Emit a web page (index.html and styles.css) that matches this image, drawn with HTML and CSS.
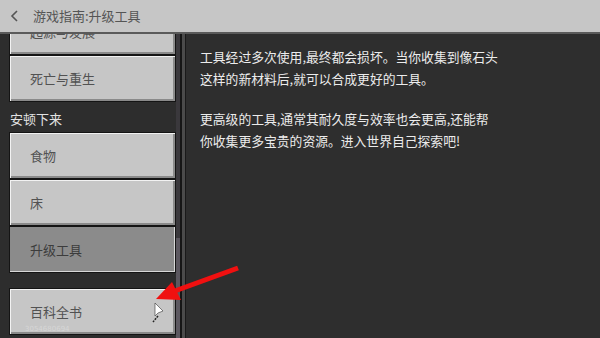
FILE: index.html
```html
<!DOCTYPE html>
<html lang="zh">
<head>
<meta charset="utf-8">
<link rel="stylesheet" href="styles.css">
</head>
<body>
<div class="app">
  <header class="topbar">
    <svg class="back" width="10" height="14" viewBox="0 0 10 14"><polyline points="7,2 2,7 7,12" fill="none" stroke="#555" stroke-width="1.6"/></svg>
    <span class="title">游戏指南:升级工具</span>
  </header>
  <div class="main">
    <nav class="sidebar">
      <div class="list">
        <div class="btn">起源与发展</div>
        <div class="btn">死亡与重生</div>
        <div class="section">安顿下来</div>
        <div class="btn">食物</div>
        <div class="btn">床</div>
        <div class="btn selected">升级工具</div>
        <div class="btn last">百科全书<span class="mark">3054680694</span></div>
      </div>
    </nav>
    <div class="scrollbar"><div class="thumb"></div></div>
    <div class="divider"></div>
    <section class="content">
      <p>工具经过多次使用,最终都会损坏。当你收集到像石头<br>这样的新材料后,就可以合成更好的工具。</p>
      <p>更高级的工具,通常其耐久度与效率也会更高,还能帮<br>你收集更多宝贵的资源。进入世界自己探索吧!</p>
    </section>
  </div>
  <svg class="annotation" width="600" height="338" viewBox="0 0 600 338">
    <line x1="238" y1="268" x2="172" y2="292" stroke="#f01010" stroke-width="5"/>
    <polygon points="156,299 172,282 181,300" fill="#f01010"/>
    <polygon points="155,303 155,316 158,313 163,311" fill="#ffffff" stroke="#333" stroke-width="0.6"/>
    <line x1="158" y1="316" x2="153" y2="322" stroke="#222" stroke-width="1.5" stroke-dasharray="2,1"/>
  </svg>
</div>
</body>
</html>
```
FILE: styles.css
```css
* { box-sizing: border-box; }
html, body { margin: 0; padding: 0; }
body {
  width: 600px;
  height: 338px;
  overflow: hidden;
  background: #2e2e2e;
  font-family: "Noto Sans CJK SC", "Noto Sans", sans-serif;
}
.app {
  position: relative;
  width: 600px;
  height: 338px;
  display: flex;
  flex-direction: column;
}
.topbar {
  height: 34px;
  flex: none;
  background: #c6c6c6;
  border-bottom: 2px solid #5a5a5a;
  display: flex;
  align-items: center;
  padding-left: 10px;
  gap: 13px;
}
.back { display: block; }
.title {
  font-size: 13px;
  color: #555555;
  line-height: 16px;
}
.main {
  flex: 1;
  display: flex;
  min-height: 0;
}
.sidebar {
  width: 176px;
  flex: none;
  background: #2d2d2d;
  padding-left: 9px;
  overflow: hidden;
}
.list {
  margin-top: -26px;
  display: flex;
  flex-direction: column;
}
.btn {
  height: 47px;
  border: 1px solid #141414;
  background: #c6c6c6;
  box-shadow: inset 1px 1px 0 #f2f2f2, inset -2px -2px 0 #8a8a8a;
  display: flex;
  align-items: center;
  padding-left: 20px;
  font-size: 13px;
  color: #525252;
  position: relative;
}
.btn.selected {
  background: #8b8b8b;
  box-shadow: inset -1px -1px 0 #d8d8d8;
  color: #3c3c3c;
}
.btn.last { margin-top: 15px; }
.mark {
  position: absolute;
  left: 15px;
  bottom: 1px;
  font-size: 7px;
  line-height: 8px;
  color: #d6d6d6;
  font-family: "DejaVu Sans", sans-serif;
}
.section {
  height: 30px;
  display: flex;
  align-items: flex-end;
  padding-bottom: 5px;
  font-size: 13px;
  line-height: 16px;
  color: #e2e2e2;
  padding-left: 1px;
}
.scrollbar {
  width: 4px;
  flex: none;
  background: #3a383c;
  display: flex;
  flex-direction: column;
}
.thumb {
  margin-top: 204px;
  flex: 1;
  background: #5c5860;
}
.divider {
  width: 6px;
  flex: none;
  background: #4b4b4b;
  border-left: 2px solid #161616;
  border-right: 1px solid #1a1a1a;
}
.content {
  flex: 1;
  background: #2e2e2e;
  padding: 12px 14px;
}
.content p {
  margin: 0 0 18px;
  font-size: 12.8px;
  line-height: 22px;
  color: #ececec;
}
.annotation {
  position: absolute;
  left: 0;
  top: 0;
  pointer-events: none;
}
```
